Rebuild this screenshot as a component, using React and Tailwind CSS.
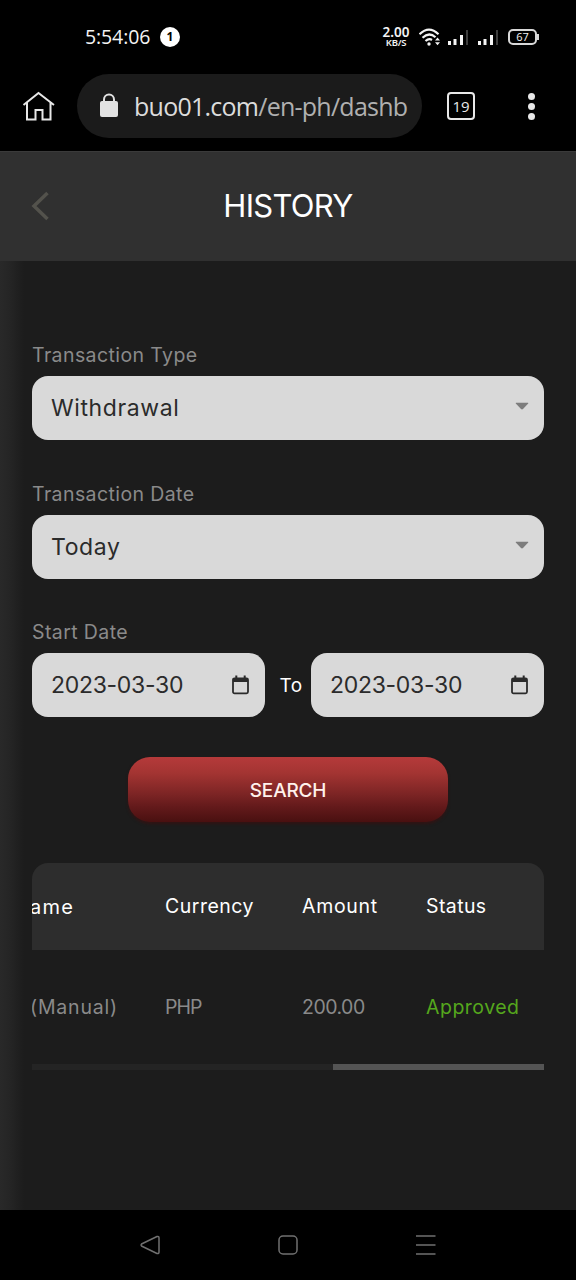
function Signal() {
  return (
    <svg width="21" height="17" viewBox="0 0 21 17" className="shrink-0">
      <path d="M0 12h3v4H0z M5.500 10h3v6h-3z M12 6h3v10h-3z" fill="#f4f4f4" />
      <path d="M18 1h2v15h-2z" fill="#3c3c3c" />
    </svg>
  );
}

function StatusBar() {
  return (
    <div className="flex h-[74px] w-full shrink-0 items-center pl-[85px] pr-[37px] text-[#f4f4f4]">
      <span className="w-[75px] text-[19.500px] leading-6 tracking-[-0.1px] whitespace-nowrap font-['Open_Sans',sans-serif]">5:54:06</span>
      <span className="flex size-[20px] items-center justify-center rounded-full bg-white font-['Noto_Sans',sans-serif] text-[12px] font-bold leading-none text-black">1</span>
      <div className="ml-auto flex w-[28px] flex-col items-center whitespace-nowrap font-['Noto_Sans',sans-serif] font-semibold">
        <span className="text-[13.500px] leading-[11px]">2.00</span>
        <span className="text-[9.500px] leading-[10px] tracking-[-0.2px]">KB/S</span>
      </div>
      <svg width="24" height="20" viewBox="0 0 24 20" className="ml-[9px] shrink-0" fill="none" stroke="#f4f4f4" strokeWidth="2.2">
        <path d="M0.500 7.300Q10 -2 19.500 7.300" />
        <path d="M3.500 10.800Q10 4.500 16.500 10.300" />
        <path d="M6.500 14Q10 11 13 13" />
        <circle cx="10" cy="17" r="1.700" fill="#f4f4f4" stroke="none" />
        <path d="M16 13.500L18.500 10.500l2.500 3z M16 15.300L18.500 18.300l2.500-3z" fill="#f4f4f4" stroke="none" />
      </svg>
      <div className="ml-[5px] mr-[9px]"><Signal /></div>
      <Signal />
      <div className="ml-[9px] flex items-center">
        <div className="flex h-[16px] w-[29px] items-center justify-center rounded-[5px] border-2 border-[#d8d8d8] pb-px font-['Open_Sans',sans-serif] text-[11px] leading-none">67</div>
        <div className="h-[6px] w-[2px] bg-[#d8d8d8]" />
      </div>
    </div>
  );
}

function BrowserBar() {
  return (
    <div className="flex h-[77px] w-full shrink-0 items-start pl-[22px]">
      <svg width="34" height="32" viewBox="0 0 34 32" className="mt-[16px] shrink-0" fill="none" stroke="#e8e8e8" strokeWidth="2">
        <path d="M1.500 15L16.500 3L32 15M5 12.500V29.500H13.500V20H20.500V29.500H28.500V12.500" />
      </svg>
      <div className="ml-[21px] flex h-[64px] w-[345px] items-center rounded-full bg-[#1b1b1b] pl-[22px]">
        <svg width="20" height="26" viewBox="0 0 20 26" className="mb-[2px] shrink-0">
          <path d="M5 10V7.500a5 5 0 0 1 10 0V10" fill="none" stroke="#e2e2e2" strokeWidth="2" />
          <rect x="1" y="9" width="18" height="16" rx="2" fill="#e2e2e2" />
        </svg>
        <span className="ml-[15px] whitespace-nowrap text-[25px] font-normal leading-8 tracking-[-0.75px] text-[#dcdcdc] font-['Open_Sans',sans-serif]">
          buo01.com<span className="text-[#b0b0b0]">/en-ph/dashb</span>
        </span>
      </div>
      <div className="ml-[25px] mt-[18px] flex size-[28px] items-center justify-center rounded-[4px] border-2 border-[#e8e8e8] text-[15px] leading-none text-[#e8e8e8] font-['Open_Sans',sans-serif]">19</div>
      <div className="ml-[53px] mt-[19px] flex w-[7px] flex-col gap-[3px]">
        <i className="size-[7px] rounded-full bg-[#e8e8e8]" />
        <i className="size-[7px] rounded-full bg-[#e8e8e8]" />
        <i className="size-[7px] rounded-full bg-[#e8e8e8]" />
      </div>
    </div>
  );
}

function Label({ children }) {
  return <div className="h-[26px] whitespace-nowrap pt-px text-[19.500px] leading-[26px] tracking-[0.4px] text-[#8a8a8a]">{children}</div>;
}

function Select({ value }) {
  return (
    <div className="mt-[9px] flex h-[64px] items-center justify-between rounded-[16px] bg-[#d9d9d9] pl-[19px] pr-[15px] text-[23px] text-[#2b2b2b]">
      <span className="tracking-[0.6px]">{value}</span>
      <svg width="14" height="8" viewBox="0 0 14 8" className="mb-[4px]">
        <path d="M1 .7h12q.7.300 0 1L8 7q-1 .8-2 0L1 1.700q-.7-.7 0-1z" fill="#7d7d7d" />
      </svg>
    </div>
  );
}

function DateField({ value }) {
  return (
    <div className="flex h-[64px] w-[233px] items-center justify-between rounded-[16px] bg-[#d9d9d9] pl-[19px] pr-[16px] text-[23px] text-[#2b2b2b]">
      <span className="whitespace-nowrap tracking-[-0.3px]">{value}</span>
      <svg width="17" height="20" viewBox="0 0 17 20">
        <rect x="1" y="3.300" width="15" height="15" rx="1.500" fill="none" stroke="#2b2b2b" strokeWidth="1.800" />
        <path d="M1 3h15v4H1z M3.300 0.500h2V3h-2z M11.700 0.500h2V3h-2z" fill="#2b2b2b" />
      </svg>
    </div>
  );
}

function TransactionTable() {
  return (
    <div className="mt-[41px] w-[512px] overflow-hidden">
      <div className="flex h-[87px] items-center overflow-hidden rounded-t-[16px] bg-[#2d2d2d] pt-px text-[19.500px] text-white">
        <span className="w-[133px]"><span className="-ml-[2px] text-[20px] tracking-[1.300px]">ame</span></span>
        <span className="w-[137px] tracking-[0.5px]">Currency</span>
        <span className="w-[124px] tracking-[0.7px]">Amount</span>
        <span className="tracking-[0.4px]">Status</span>
      </div>
      <div className="flex h-[114px] items-center pt-px text-[19.500px] text-[#8a8a8a]">
        <span className="w-[133px]"><span className="-ml-[2px] tracking-[0.8px]">(Manual)</span></span>
        <span className="w-[137px] tracking-[-1px]">PHP</span>
        <span className="w-[124px] tracking-[-0.5px]">200.00</span>
        <span className="tracking-[0.5px] text-[#55a71d]">Approved</span>
      </div>
      <div className="flex h-[6px] justify-end bg-[#242424]">
        <div className="w-[211px] bg-[#545454]" />
      </div>
    </div>
  );
}

function NavBar() {
  return (
    <div className="flex h-[70px] w-full shrink-0 items-center justify-between px-[139px]">
      <svg width="22" height="22" viewBox="0 0 22 22" fill="none" stroke="#707070" strokeWidth="1.500" strokeLinejoin="round">
        <path d="M2.500 10Q1.500 11 2.500 12L18 19.500Q20 20 20 18V4Q20 2 18 2.500Z" />
      </svg>
      <svg width="20" height="20" viewBox="0 0 20 20" fill="none" stroke="#707070" strokeWidth="1.500">
        <rect x="1" y="1" width="18" height="18" rx="4" />
      </svg>
      <svg width="22" height="20" viewBox="0 0 22 20" stroke="#707070" strokeWidth="1.500">
        <path d="M1 1h19.500M1 10h19.500M1 19h19.500" />
      </svg>
    </div>
  );
}

export default function App() {
  return (
    <div className="flex h-[1280px] w-[576px] flex-col overflow-hidden bg-black font-['Inter',sans-serif]">
      <StatusBar />
      <BrowserBar />
      <header className="grid h-[110px] shrink-0 grid-cols-[1fr_auto_1fr] items-center border-t border-[#3a3a3a] bg-[#303030] px-[31px] pb-[2px]">
        <svg width="18" height="30" viewBox="0 0 18 30" fill="none" stroke="#53524c" strokeWidth="3.500">
          <path d="M16.500 2L3 15L16.500 28" />
        </svg>
        <h1 className="text-[31px] font-normal leading-10 tracking-[-0.7px] text-white">HISTORY</h1>
        <span />
      </header>
      <main className="flex flex-1 flex-col bg-[#1c1c1c] bg-[linear-gradient(90deg,#292929_0px,#252525_10px,#1c1c1c_24px)] px-[32px] pt-[80px]">
        <Label>Transaction Type</Label>
        <Select value="Withdrawal" />
        <div className="h-[40px]" />
        <Label>Transaction Date</Label>
        <Select value="Today" />
        <div className="h-[39px]" />
        <Label>Start Date</Label>
        <div className="mt-[9px] flex items-center justify-between">
          <DateField value="2023-03-30" />
          <span className="pl-[6px] pt-[2px] text-[19px] tracking-[0.5px] text-white">To</span>
          <DateField value="2023-03-30" />
        </div>
        <button className="mt-[40px] h-[65px] w-[320px] shrink-0 self-center rounded-[22px] bg-[linear-gradient(180deg,#b53a3a_0%,#a33432_25%,#7b2424_58%,#641a1b_76%,#491010_100%)] pt-[3px] text-[19px] font-medium tracking-[-0.2px] text-[#fff1ec] shadow-[0_2px_3px_#321313]">SEARCH</button>
        <TransactionTable />
      </main>
      <NavBar />
    </div>
  );
}
